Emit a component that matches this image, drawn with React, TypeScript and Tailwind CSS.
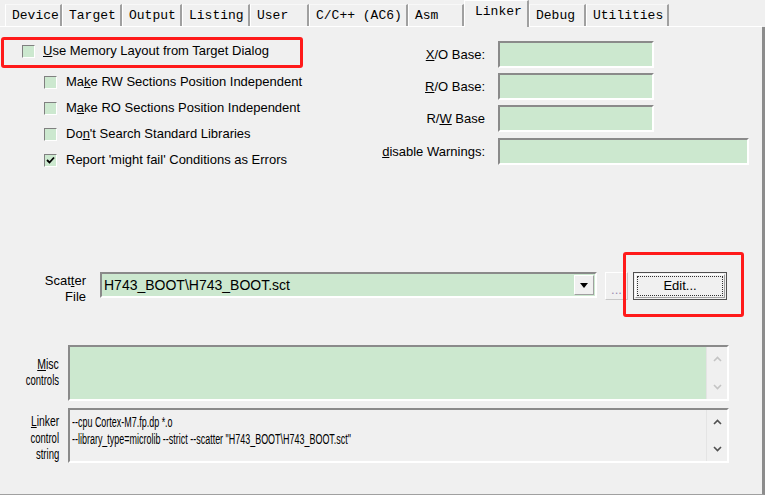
import React from "react";

// pestañas del diálogo de opciones
const tabs = [
  { label: "Device", w: 57 },
  { label: "Target", w: 60 },
  { label: "Output", w: 60 },
  { label: "Listing", w: 68 },
  { label: "User", w: 59 },
  { label: "C/C++ (AC6)", w: 99 },
  { label: "Asm", w: 56 },
  { label: "Linker", w: 65, active: true },
  { label: "Debug", w: 57 },
  { label: "Utilities", w: 83 },
];

function Check({ checked }: { checked?: boolean }) {
  return (
    <span className="w-[13px] h-[13px] shrink-0 bg-[#cce8cf] border border-t-[#808080] border-l-[#808080] border-b-white border-r-white flex items-center justify-center">
      {checked && (
        <svg width="9" height="9" viewBox="0 0 9 9">
          <path d="M1 4 L3.5 6.5 L8 1.5" stroke="#000" strokeWidth="1.8" fill="none" />
        </svg>
      )}
    </span>
  );
}

function Field({ w }: { w: number }) {
  return (
    <div
      className="h-[27px] bg-[#cce8cf] border-2 border-t-[#8a8a8a] border-l-[#8a8a8a] border-b-white border-r-white"
      style={{ width: w }}
    />
  );
}

function Chevron({ up, color }: { up?: boolean; color: string }) {
  return (
    <svg width="9" height="6" viewBox="0 0 9 6">
      <path d={up ? "M1 5 L4.5 1.5 L8 5" : "M1 1 L4.5 4.5 L8 1"} stroke={color} strokeWidth="1.6" fill="none" />
    </svg>
  );
}

export default function App() {
  return (
    <div
      className="relative w-[765px] h-[495px] bg-[#f0f0f0] overflow-hidden flex flex-col text-[13px] text-black"
      style={{ fontFamily: '"Liberation Sans", Arial, sans-serif' }}
    >
      {/* barra de pestañas */}
      <div
        className="h-[27px] shrink-0 flex items-end pl-[5px] border-b border-white mr-[3px]"
        style={{ fontFamily: '"Liberation Mono", "Noto Sans CJK SC", monospace' }}
      >
        {tabs.map((t) =>
          t.active ? (
            <div
              key={t.label}
              className="h-[27px] -mb-px relative z-10 bg-[#f0f0f0] border-l border-white border-r-2 border-r-[#a0a0a0] border-t border-t-white pl-[10px] pt-[3px] leading-[16px]"
              style={{ width: t.w }}
            >
              {t.label}
            </div>
          ) : (
            <div
              key={t.label}
              className="h-[22px] border-l border-white border-r-2 border-r-[#a0a0a0] border-t border-t-[#f8f8f8] pl-[6px] pt-[3px] leading-[16px]"
              style={{ width: t.w }}
            >
              {t.label}
            </div>
          )
        )}
      </div>

      {/* panel Linker */}
      <div className="flex-1 flex flex-col border-r-[3px] border-r-[#8c8c8c] border-b border-b-[#a0a0a0]">
        <div className="flex">
          <div className="w-[370px] pl-[22px] pt-[11px]">
            <div className="h-[26px] flex items-center gap-[8px]">
              <Check />
              <span>
                <u>U</u>se Memory Layout from Target Dialog
              </span>
            </div>
            <div className="mt-[5px] pl-[22px] flex flex-col">
              <div className="h-[26px] flex items-center gap-[9px]">
                <Check />
                <span>
                  Ma<u>k</u>e RW Sections Position Independent
                </span>
              </div>
              <div className="h-[26px] flex items-center gap-[9px]">
                <Check />
                <span>
                  M<u>a</u>ke RO Sections Position Independent
                </span>
              </div>
              <div className="h-[26px] flex items-center gap-[9px]">
                <Check />
                <span>
                  Do<u>n</u>'t Search Standard Libraries
                </span>
              </div>
              <div className="h-[26px] flex items-center gap-[9px]">
                <Check checked />
                <span>
                  Report 'mi<u>g</u>ht fail' Conditions as Errors
                </span>
              </div>
            </div>
          </div>

          <div className="pt-[14px] flex flex-col gap-[5px]">
            <div className="flex items-center">
              <span className="w-[115px] text-right">
                <u>X</u>/O Base:
              </span>
              <span className="w-[13px]" />
              <Field w={156} />
            </div>
            <div className="flex items-center">
              <span className="w-[115px] text-right">
                <u>R</u>/O Base:
              </span>
              <span className="w-[13px]" />
              <Field w={156} />
            </div>
            <div className="flex items-center">
              <span className="w-[115px] text-right">
                R/<u>W</u> Base
              </span>
              <span className="w-[13px]" />
              <Field w={156} />
            </div>
            <div className="flex items-center mt-[1px]">
              <span className="w-[115px] text-right whitespace-nowrap">
                <u>d</u>isable Warnings:
              </span>
              <span className="w-[13px]" />
              <Field w={251} />
            </div>
          </div>
        </div>

        {/* Scatter file */}
        <div className="mt-[99px] flex items-start h-[28px]">
          <div className="w-[86px] text-right leading-[16px] pt-[1px]">
            <div>
              Scat<u>t</u>er
            </div>
            <div>File</div>
          </div>
          <div className="ml-[14px] w-[497px] h-[26px] bg-[#cce8cf] border-2 border-t-[#8a8a8a] border-l-[#8a8a8a] border-b-white border-r-white flex items-center">
            <span className="flex-1 pl-[2px] text-[14px]">H743_BOOT\H743_BOOT.sct</span>
            <span className="w-[20px] h-[20px] mr-[1px] bg-[#f0f0f0] border border-t-white border-l-white border-b-[#a0a0a0] border-r-[#a0a0a0] flex items-center justify-center">
              <svg width="8" height="5" viewBox="0 0 8 5">
                <path d="M0 0 H8 L4 5 Z" fill="#000" />
              </svg>
            </span>
          </div>
          <div className="ml-[8px] w-[23px] h-[28px] bg-[#f0f0f0] border border-white border-r-[#c8c8c8] border-b-[#c8c8c8] flex items-end justify-center text-[#9a8ab0] leading-[14px] pb-[2px]">
            ...
          </div>
          <div className="ml-[5px] w-[94px] h-[28px] border border-[#505050] bg-[#f0f0f0] p-[1px]">
            <div className="h-full border border-white border-r-[#a0a0a0] border-b-[#a0a0a0] p-[1px]">
              <div className="h-full border border-dotted border-[#303030] flex items-center justify-center">
                Edit...
              </div>
            </div>
          </div>
        </div>

        {/* Misc controls */}
        <div className="mt-[45px] flex items-start h-[56px]">
          <div className="w-[59px] pt-[11px] flex flex-col items-end leading-[16px] text-[14px]">
            <span className="inline-block scale-x-75 origin-right">
              <u>M</u>isc
            </span>
            <span className="inline-block scale-x-[0.68] origin-right">controls</span>
          </div>
          <div className="ml-[9px] w-[661px] h-[56px] bg-[#cce8cf] border-2 border-t-[#8a8a8a] border-l-[#8a8a8a] border-b-white border-r-white flex">
            <div className="flex-1" />
            <div className="w-[21px] bg-[#f0f0f0] border-l border-[#e4e4e4] flex flex-col items-center justify-between py-[9px]">
              <Chevron up color="#c4c4c4" />
              <Chevron color="#c4c4c4" />
            </div>
          </div>
        </div>

        {/* Linker control string */}
        <div className="mt-[7px] flex items-start">
          <div className="w-[59px] pt-[5px] flex flex-col items-end leading-[16.5px] text-[14px]">
            <span className="inline-block scale-x-[0.74] origin-right">
              <u>L</u>inker
            </span>
            <span className="inline-block scale-x-[0.68] origin-right">control</span>
            <span className="inline-block scale-x-[0.68] origin-right">string</span>
          </div>
          <div className="ml-[9px] w-[661px] h-[55px] bg-[#f0f0f0] border-2 border-t-[#8a8a8a] border-l-[#8a8a8a] border-b-white border-r-white flex">
            <div className="flex-1 pl-[2px] pt-[4px] leading-[17px] text-[14px] flex flex-col items-start whitespace-nowrap">
              <span className="inline-block scale-x-[0.64] origin-left">--cpu Cortex-M7.fp.dp *.o</span>
              <span className="inline-block scale-x-[0.64] origin-left">
                --library_type=microlib --strict --scatter "H743_BOOT\H743_BOOT.sct"
              </span>
            </div>
            <div className="w-[21px] border-l border-[#e4e4e4] flex flex-col items-center justify-between py-[9px]">
              <Chevron up color="#505050" />
              <Chevron color="#505050" />
            </div>
          </div>
        </div>
      </div>

      {/* marcos rojos de anotación */}
      <div className="absolute left-[1px] top-[37px] w-[302px] h-[31px] border-[3px] border-[#ff1a1a] rounded-[3px]" />
      <div className="absolute left-[623px] top-[252px] w-[121px] h-[65px] border-[3px] border-[#ff1a1a] rounded-[3px]" />
    </div>
  );
}
